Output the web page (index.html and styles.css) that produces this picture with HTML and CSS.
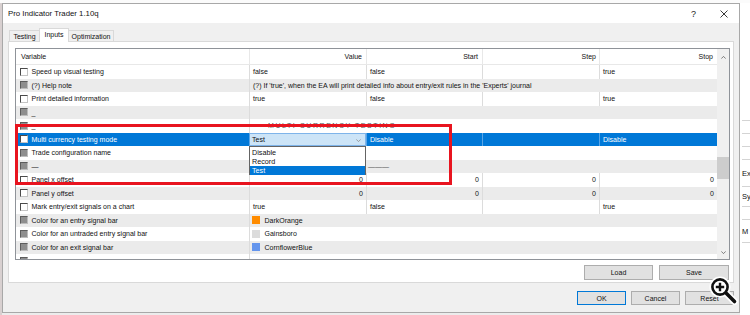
FILE: index.html
```html
<!DOCTYPE html>
<html>
<head>
<meta charset="utf-8">
<link rel="stylesheet" href="styles.css">
</head>
<body>
<div class="topstrip"></div>
<div class="main">
  <div class="leftstrip"></div>
  <div class="dialog">
    <div class="titlebar">
      <span class="title">Pro Indicator Trader 1.10q</span>
      <span class="help">?</span>
      <svg class="close" width="8" height="8" viewBox="0 0 8 8"><path d="M0.5 0.5L7.5 7.5M7.5 0.5L0.5 7.5" stroke="#222" stroke-width="0.9" fill="none"/></svg>
    </div>
    <div class="tabs">
      <div class="tab t1">Testing</div>
      <div class="tab t2 active">Inputs</div>
      <div class="tab t3">Optimization</div>
    </div>
    <div class="page">
      <div class="grid">
        <div class="cols">
          <div class="hdr">
            <div class="h hv">Variable</div>
            <div class="h">Value</div>
            <div class="h">Start</div>
            <div class="h hs">Step</div>
            <div class="h">Stop</div>
          </div>
          <div class="rows">
            <div class="row w">
              <div class="c var"><i class="cb"></i>Speed up visual testing</div>
              <div class="c">false</div><div class="c">false</div><div class="c"></div><div class="c">true</div>
            </div>
            <div class="row g">
              <div class="c var"><i class="cb dis"></i>(?) Help note</div>
              <div class="c span">(?) If 'true', when the EA will print detailed info about entry/exit rules in the 'Experts' journal</div>
            </div>
            <div class="row w">
              <div class="c var"><i class="cb"></i>Print detailed information</div>
              <div class="c">true</div><div class="c">false</div><div class="c"></div><div class="c">true</div>
            </div>
            <div class="row g">
              <div class="c var"><i class="cb dis"></i>_</div>
              <div class="c span"></div>
            </div>
            <div class="row w">
              <div class="c var"><i class="cb dis"></i>_</div>
              <div class="c span"><span class="section">MULTI CURRENCY TESTING</span></div>
            </div>
            <div class="row sel">
              <div class="c var"><i class="cb"></i>Multi currency testing mode</div>
              <div class="c combo">Test
                <svg class="chev" width="5" height="3" viewBox="0 0 5 3"><path d="M0.3 0.4L2.5 2.6L4.7 0.4" stroke="#8a8a8a" stroke-width="0.8" fill="none"/></svg>
                <div class="list">
                  <div class="opt">Disable</div>
                  <div class="opt">Record</div>
                  <div class="opt on">Test</div>
                </div>
              </div>
              <div class="c">Disable</div><div class="c"></div><div class="c">Disable</div>
            </div>
            <div class="row w">
              <div class="c var"><i class="cb dis"></i>Trade configuration name</div>
              <div class="c span"></div>
            </div>
            <div class="row g">
              <div class="c var"><i class="cb dis"></i>—</div>
              <div class="c span"><span class="dash">———</span></div>
            </div>
            <div class="row w">
              <div class="c var"><i class="cb"></i>Panel x offset</div>
              <div class="c num">0</div><div class="c num">0</div><div class="c num">0</div><div class="c num">0</div>
            </div>
            <div class="row g">
              <div class="c var"><i class="cb"></i>Panel y offset</div>
              <div class="c num">0</div><div class="c num">0</div><div class="c num">0</div><div class="c num">0</div>
            </div>
            <div class="row w">
              <div class="c var"><i class="cb"></i>Mark entry/exit signals on a chart</div>
              <div class="c">true</div><div class="c">false</div><div class="c"></div><div class="c">true</div>
            </div>
            <div class="row g">
              <div class="c var"><i class="cb dis"></i>Color for an entry signal bar</div>
              <div class="c span"><i class="sw orange"></i>DarkOrange</div>
            </div>
            <div class="row w">
              <div class="c var"><i class="cb dis"></i>Color for an untraded entry signal bar</div>
              <div class="c span"><i class="sw gains"></i>Gainsboro</div>
            </div>
            <div class="row g">
              <div class="c var"><i class="cb dis"></i>Color for an exit signal bar</div>
              <div class="c span"><i class="sw blue"></i>CornflowerBlue</div>
            </div>
            <div class="row w">
              <div class="c var"><i class="cb dis"></i></div>
              <div class="c span"></div>
            </div>
          </div>
        </div>
        <div class="scroll">
          <div class="sbtn up"><svg width="5" height="3" viewBox="0 0 5 3"><path d="M0.3 2.6L2.5 0.4L4.7 2.6" stroke="#606060" stroke-width="0.8" fill="none"/></svg></div>
          <div class="track"><div class="thumb"></div></div>
          <div class="sbtn down"><svg width="5" height="3" viewBox="0 0 5 3"><path d="M0.3 0.4L2.5 2.6L4.7 0.4" stroke="#606060" stroke-width="0.8" fill="none"/></svg></div>
        </div>
      </div>
      <div class="pagebtns">
        <div class="btn wide">Load</div>
        <div class="btn wide2">Save</div>
      </div>
    </div>
    <div class="dlgbtns">
      <div class="btn small def">OK</div>
      <div class="btn small">Cancel</div>
      <div class="btn small">Reset</div>
    </div>
  </div>
  <div class="bgwin">
    <div class="bgrow r1"></div>
    <div class="bgrow r2"></div>
    <div class="bgrow r2"></div>
    <div class="bgrow r3"></div>
    <div class="bgrow r4">Ex</div>
    <div class="bgrow r5">Sy</div>
    <div class="bgrow r3"></div>
    <div class="bgrow r6">M</div>
  </div>
</div>
<div class="redbox"></div>
<svg class="magnifier" width="40" height="40" viewBox="0 0 40 40">
  <line x1="22.5" y1="21.5" x2="31.5" y2="30.5" stroke="#fff" stroke-width="7" stroke-linecap="round"/>
  <circle cx="17" cy="16" r="7.6" fill="#fff" stroke="#fff" stroke-width="6"/>
  <line x1="22.5" y1="21.5" x2="31.5" y2="30.5" stroke="#111" stroke-width="3.6" stroke-linecap="round"/>
  <circle cx="17" cy="16" r="7.6" fill="#fff" stroke="#111" stroke-width="2.6"/>
  <path d="M12.8 16H21.2M17 11.8V20.2" stroke="#111" stroke-width="2.4"/>
</svg>
</body>
</html>
```
FILE: styles.css
```css
* { box-sizing: border-box; margin: 0; padding: 0; }
html, body { width: 750px; height: 315px; overflow: hidden; }
body {
  font-family: "Liberation Sans", Arial, sans-serif;
  font-size: 7px;
  color: #111;
  background: #ececec;
  position: relative;
}
.topstrip { height: 3px; background: #fbfbfb; }
.main { display: flex; height: 312px; }
.leftstrip { width: 2px; background: #d8d0d0; }
.dialog {
  width: 738px;
  height: 310px;
  border: 1px solid #a8a8a8;
  background: #f0f0f0;
  display: flex;
  flex-direction: column;
}
.titlebar {
  height: 19px;
  background: #fff;
  display: flex;
  align-items: center;
  padding: 0 11px 0 5px;
}
.title { font-size: 7.8px; color: #111; }
.help { margin-left: auto; font-size: 9px; color: #222; margin-right: 24px; }
.close { display: block; }
.tabs {
  height: 18px;
  display: flex;
  align-items: flex-end;
  padding-left: 6px;
}
.tab {
  height: 11px;
  border: 1px solid #d9d9d9;
  border-bottom: none;
  background: #f0f0f0;
  display: flex;
  align-items: center;
  justify-content: center;
  color: #111;
}
.t1 { width: 30px; border-right: none; }
.t2 { width: 30px; }
.t3 { width: 45px; border-left: none; }
.tab.active {
  height: 14.5px;
  background: #fff;
  margin-bottom: -1px;
  position: relative;
  z-index: 1;
  padding-bottom: 1px;
}
.page {
  margin-left: 5px;
  width: 726px;
  height: 242px;
  border: 1px solid #d9d9d9;
  background: #fff;
  padding: 6px 4px 0 6px;
}
.grid {
  width: 715px;
  height: 212px;
  border: 1px solid #8f9399;
  display: flex;
}
.cols { width: 701px; display: flex; flex-direction: column; }
.hdr {
  height: 16px;
  display: grid;
  grid-template-columns: 233px 117px 116px 117px 118px;
  border-bottom: 1px solid #e8e8e8;
}
.h {
  display: flex;
  align-items: center;
  justify-content: flex-end;
  padding-right: 4px;
  border-left: 1px solid #e8e8e8;
  color: #111;
}
.h.hv { justify-content: flex-start; padding-left: 5px; border-left: none; }
.h.hs { padding-right: 3px; }
.rows { flex: 1; overflow: hidden; }
.row {
  height: 13.5px;
  display: grid;
  grid-template-columns: 233px 117px 116px 117px 118px;
}
.row.w { background: #fff; }
.row.g { background: #ebebeb; }
.row.sel { background: #0078d7; color: #fff; }
.c {
  display: flex;
  align-items: center;
  white-space: nowrap;
  overflow: hidden;
  padding-left: 3px;
  border-left: 1px solid #dcdcdc;
}
.row.sel .c { border-left-color: #5aa5e6; }
.c.var { border-left: none; padding-left: 4px; }
.c.span { grid-column: 2 / 6; }
.c.num { justify-content: flex-end; padding-right: 3px; }
.cb {
  width: 8px;
  height: 8px;
  margin-right: 3.5px;
  flex: none;
  background: #fff;
  border-top: 1px solid #4a4a4a;
  border-left: 1px solid #4a4a4a;
  border-right: 1px solid #c4c4c4;
  border-bottom: 1px solid #c4c4c4;
}
.cb.dis {
  background: #8e8e8e;
  border-top-color: #5c5c5c;
  border-left-color: #5c5c5c;
  border-right-color: #bdbdbd;
  border-bottom-color: #bdbdbd;
}
.section {
  margin-left: 15px;
  letter-spacing: 1.55px;
  color: #555;
}
.dash { margin-left: 115px; color: #555; }
.sw {
  width: 8px;
  height: 8px;
  flex: none;
  margin-right: 4.5px;
  margin-left: -1px;
}
.sw.orange { background: #ff8c00; }
.sw.gains { background: #dcdcdc; }
.sw.blue { background: #6495ed; }
.c.combo {
  overflow: visible;
  position: relative;
  background: #cce4f7;
  color: #111;
  border: 1px solid #7eb4ea;
  padding-left: 2px;
}
.chev { position: absolute; right: 4px; top: 5px; }
.list {
  position: absolute;
  left: -1px;
  top: 12.5px;
  width: 117px;
  height: 28.5px;
  background: #fff;
  border: 1px solid #646464;
  z-index: 2;
  display: flex;
  flex-direction: column;
  padding-top: 0.5px;
}
.opt {
  height: 9px;
  display: flex;
  align-items: center;
  padding-left: 2px;
  color: #111;
  font-size: 7.2px;
}
.opt.on { background: #0078d7; color: #fff; }
.scroll {
  width: 12px;
  background: #f0f0f0;
  display: flex;
  flex-direction: column;
}
.sbtn { display: flex; align-items: center; justify-content: center; }
.sbtn svg { display: block; }
.sbtn.up { height: 16px; }
.sbtn.down { height: 14px; }
.track { flex: 1; }
.thumb { margin-top: 92px; height: 22px; background: #cdcdcd; }
.pagebtns {
  margin-top: 5px;
  display: flex;
  justify-content: flex-end;
  gap: 6px;
}
.btn {
  height: 15px;
  background: #e1e1e1;
  border: 1px solid #adadad;
  display: flex;
  align-items: center;
  justify-content: center;
  color: #111;
}
.btn.wide { width: 69px; }
.btn.wide2 { width: 70px; }
.dlgbtns {
  margin-top: 8px;
  display: flex;
  justify-content: flex-end;
  gap: 5px;
  padding-right: 5px;
}
.btn.small { width: 49px; height: 14px; }
.btn.def { border-color: #0078d7; }
.bgwin {
  flex: 1;
  background: #fff;
  display: flex;
  flex-direction: column;
  padding-left: 2px;
  font-size: 7.5px;
  overflow: hidden;
}
.bgrow { border-bottom: 1px solid #d4d4d4; display: flex; align-items: center; }
.bgrow.r1 { height: 118px; }
.bgrow.r2 { height: 13px; }
.bgrow.r3 { height: 13px; }
.bgrow.r4 { height: 27px; }
.bgrow.r5 { height: 20px; }
.bgrow.r6 { height: 23px; }
.redbox {
  position: absolute;
  left: 15px;
  top: 123.5px;
  width: 437px;
  height: 61px;
  border: 3px solid #e8141f;
  z-index: 5;
}
.magnifier {
  position: absolute;
  left: 703px;
  top: 271px;
  z-index: 6;
}
```
